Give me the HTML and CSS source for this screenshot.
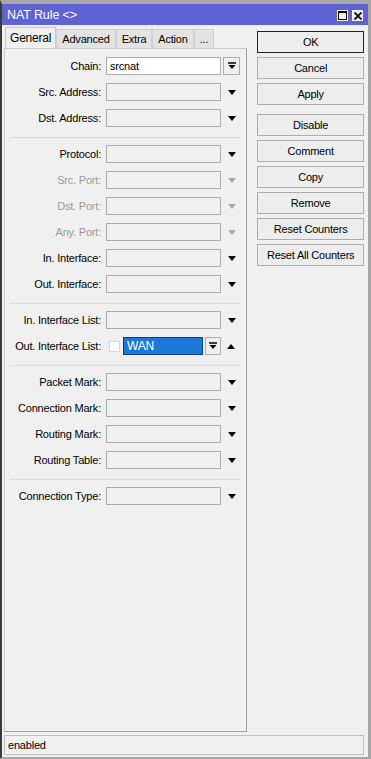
FILE: index.html
```html
<!DOCTYPE html>
<html lang="en">
<head>
    <meta charset="UTF-8">
    <title>NAT Rule</title>
    <link rel="stylesheet" href="styles.css">
</head>
<body>
    <div class="window">
        <div class="titlebar">
            <span class="title">NAT Rule &lt;&gt;</span>
            <div class="title-btns">
                <span class="title-btn"><span class="max-icon"></span></span>
                <span class="title-btn close">
                    <svg width="8" height="8" viewBox="0 0 8 8"><path d="M0.5 0.5L7.5 7.5M7.5 0.5L0.5 7.5" stroke="#000" stroke-width="1.8"/></svg>
                </span>
            </div>
        </div>

        <div class="content">
            <div class="main">
                <div class="tabs">
                    <div class="tab active">General</div>
                    <div class="tab">Advanced</div>
                    <div class="tab">Extra</div>
                    <div class="tab">Action</div>
                    <div class="tab">...</div>
                </div>

                <div class="panel">
                    <div class="row">
                        <label>Chain:</label>
                        <div class="field white">srcnat</div>
                        <span class="combo-btn">
                            <svg width="8" height="8" viewBox="0 0 8 8"><path d="M0 1H8" stroke="#000" stroke-width="1.5"/><path d="M0.5 3H7.5L4 7Z" fill="#000"/></svg>
                        </span>
                    </div>
                    <div class="row">
                        <label>Src. Address:</label>
                        <div class="field"></div>
                        <span class="arrow"></span>
                    </div>
                    <div class="row">
                        <label>Dst. Address:</label>
                        <div class="field"></div>
                        <span class="arrow"></span>
                    </div>

                    <div class="sep"></div>

                    <div class="row">
                        <label>Protocol:</label>
                        <div class="field"></div>
                        <span class="arrow"></span>
                    </div>
                    <div class="row disabled">
                        <label>Src. Port:</label>
                        <div class="field"></div>
                        <span class="arrow"></span>
                    </div>
                    <div class="row disabled">
                        <label>Dst. Port:</label>
                        <div class="field"></div>
                        <span class="arrow"></span>
                    </div>
                    <div class="row disabled">
                        <label>Any. Port:</label>
                        <div class="field"></div>
                        <span class="arrow"></span>
                    </div>
                    <div class="row">
                        <label>In. Interface:</label>
                        <div class="field"></div>
                        <span class="arrow"></span>
                    </div>
                    <div class="row">
                        <label>Out. Interface:</label>
                        <div class="field"></div>
                        <span class="arrow"></span>
                    </div>

                    <div class="sep"></div>

                    <div class="row">
                        <label>In. Interface List:</label>
                        <div class="field"></div>
                        <span class="arrow"></span>
                    </div>
                    <div class="row">
                        <label>Out. Interface List:</label>
                        <div class="list-value">
                            <span class="check"></span>
                            <div class="field selected">WAN</div>
                            <span class="combo-btn small">
                                <svg width="8" height="8" viewBox="0 0 8 8"><path d="M0 1H8" stroke="#000" stroke-width="1.5"/><path d="M0.5 3H7.5L4 7Z" fill="#000"/></svg>
                            </span>
                        </div>
                        <span class="arrow up"></span>
                    </div>

                    <div class="sep"></div>

                    <div class="row">
                        <label>Packet Mark:</label>
                        <div class="field"></div>
                        <span class="arrow"></span>
                    </div>
                    <div class="row">
                        <label>Connection Mark:</label>
                        <div class="field"></div>
                        <span class="arrow"></span>
                    </div>
                    <div class="row">
                        <label>Routing Mark:</label>
                        <div class="field"></div>
                        <span class="arrow"></span>
                    </div>
                    <div class="row">
                        <label>Routing Table:</label>
                        <div class="field"></div>
                        <span class="arrow"></span>
                    </div>

                    <div class="sep"></div>

                    <div class="row">
                        <label>Connection Type:</label>
                        <div class="field"></div>
                        <span class="arrow"></span>
                    </div>
                </div>
            </div>

            <div class="side">
                <button class="btn default">OK</button>
                <button class="btn">Cancel</button>
                <button class="btn">Apply</button>
                <div class="btn-gap"></div>
                <button class="btn">Disable</button>
                <button class="btn">Comment</button>
                <button class="btn">Copy</button>
                <button class="btn">Remove</button>
                <button class="btn">Reset Counters</button>
                <button class="btn">Reset All Counters</button>
            </div>
        </div>

        <div class="status">enabled</div>
    </div>
</body>
</html>
```

FILE: styles.css
```css
* {
    margin: 0;
    padding: 0;
    box-sizing: border-box;
}

body {
    width: 371px;
    height: 759px;
    background: #a8a8a8;
    font-family: "Liberation Sans", Arial, sans-serif;
    font-size: 11px;
    letter-spacing: -0.2px;
    color: #000;
    overflow: hidden;
}

.window {
    width: 371px;
    height: 759px;
    background: #f0f0f0;
    border-top: 4px solid #a8a8a8;
    border-left: 2px solid #3a3a3a;
    border-right: 3px solid #a8a8a8;
    border-bottom: 2px solid #a8a8a8;
    display: flex;
    flex-direction: column;
}

.titlebar {
    height: 21px;
    background: #5f62d3;
    display: flex;
    align-items: center;
    justify-content: space-between;
    padding: 0 4px 0 5px;
    color: #fff;
}

.title {
    font-size: 12.5px;
    letter-spacing: -0.1px;
}

.title-btns {
    display: flex;
    gap: 2px;
    padding-top: 2px;
}

.title-btn {
    width: 13px;
    height: 13px;
    background: #f0f0f0;
    border: 1px solid #707070;
    display: flex;
    align-items: center;
    justify-content: center;
}

.max-icon {
    width: 9px;
    height: 9px;
    border: 1px solid #000;
    border-top-width: 2px;
}

.content {
    flex: 1;
    display: flex;
    padding: 2px 4px 0 2px;
    gap: 10px;
}

.main {
    width: 244px;
    display: flex;
    flex-direction: column;
}

.tabs {
    display: flex;
    align-items: flex-end;
    height: 21px;
    padding-left: 1px;
}

.tab {
    height: 19px;
    padding: 0 5px;
    background: #e3e3e3;
    border: 1px solid #d0d0d0;
    border-bottom: none;
    display: flex;
    align-items: center;
    color: #000;
}

.tab.active {
    height: 21px;
    background: #f0f0f0;
    border-color: #c8c8c8;
    padding: 0 4px;
    font-size: 12px;
}

.panel {
    flex: 1;
    border: 1px solid #c8c8c8;
    border-right-color: #a0a0a0;
    border-bottom-color: #a0a0a0;
    padding-top: 4px;
}

.row {
    height: 26px;
    display: flex;
    align-items: center;
}

.row label {
    width: 96px;
    text-align: right;
    margin-right: 5px;
    white-space: nowrap;
}

.row.disabled label {
    color: #9a9a9a;
}

.field {
    width: 115px;
    height: 18px;
    border: 1px solid #adadad;
    background: #f0f0f0;
    padding-left: 3px;
    line-height: 16px;
}

.field.white {
    background: #fff;
}

.combo-btn {
    width: 17px;
    height: 18px;
    margin-left: 2px;
    border: 1px solid #adadad;
    background: #f0f0f0;
    display: flex;
    align-items: center;
    justify-content: center;
}

.combo-btn.small {
    width: 16px;
}

.arrow {
    width: 0;
    height: 0;
    margin-left: 7px;
    border-left: 4px solid transparent;
    border-right: 4px solid transparent;
    border-top: 5px solid #000;
}

.row.disabled .arrow {
    border-top-color: #a8a8a8;
}

.arrow.up {
    margin-left: 6px;
    border-top: none;
    border-bottom: 5px solid #000;
}

.list-value {
    width: 115px;
    display: flex;
    align-items: center;
}

.check {
    width: 11px;
    height: 11px;
    margin-left: 3px;
    background: #fff;
    border: 1px solid #d8d8d8;
}

.field.selected {
    width: 80px;
    margin-left: 3px;
    background: #1c78d8;
    border: 1px solid #0a3f80;
    color: #fff;
    font-size: 12px;
}

.list-value .combo-btn {
    margin-left: 2px;
}

.sep {
    height: 1px;
    margin: 6px 6px 3px 5px;
    background: #dcdcdc;
}

.side {
    width: 107px;
    display: flex;
    flex-direction: column;
    gap: 4px;
    padding-top: 4px;
}

.btn {
    height: 22px;
    border: 1px solid #adadad;
    background: #ededed;
    font-family: "Liberation Sans", Arial, sans-serif;
    font-size: 11px;
    letter-spacing: -0.2px;
    color: #000;
}

.btn.default {
    border-color: #222;
}

.btn-gap {
    height: 2px;
    margin-top: -1px;
}

.status {
    height: 20px;
    margin: 3px 4px 2px 2px;
    border: 1px solid #c0c0c0;
    padding-left: 3px;
    line-height: 18px;
}
```
